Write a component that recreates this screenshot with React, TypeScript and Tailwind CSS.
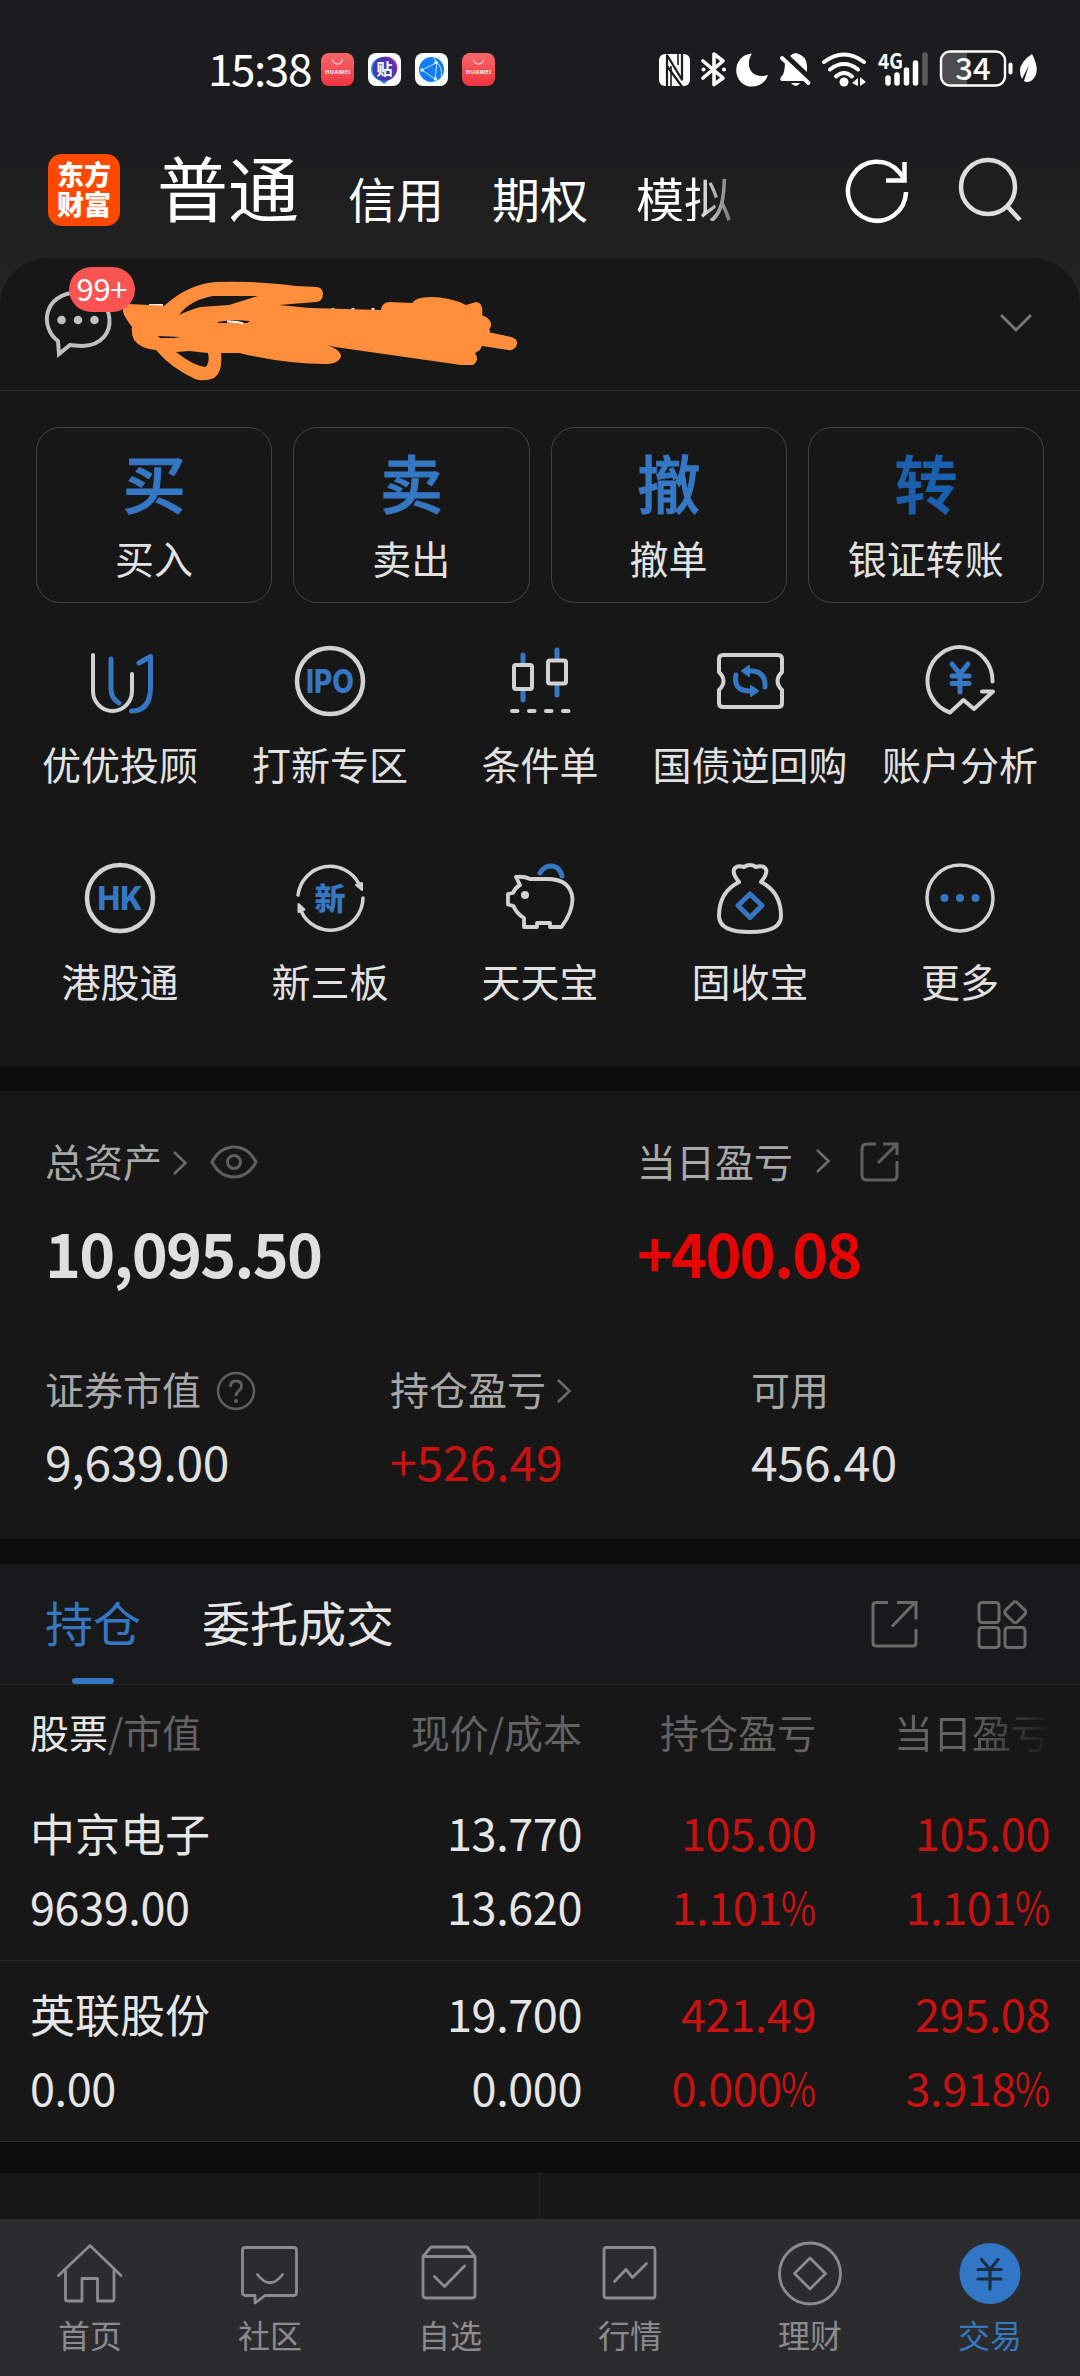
import type { ReactNode } from "react";
import clsx from "clsx";

const BLUE = "#3577c3";
const WHITE = "#d2d2d2";

type IconProps = { children: ReactNode; size?: number; className?: string };

function Icon({ children, size = 72, className }: IconProps) {
  return (
    <svg
      width={size}
      height={size}
      viewBox={`0 0 ${size} ${size}`}
      fill="none"
      strokeLinecap="round"
      strokeLinejoin="round"
      className={clsx("shrink-0", className)}
    >
      {children}
    </svg>
  );
}

function HuaweiIcon() {
  return (
    <svg width="33" height="33" viewBox="0 0 33 33" className="shrink-0">
      <defs>
        <linearGradient id="hw" x1="0" y1="0" x2="0" y2="1">
          <stop offset="0" stopColor="#f8686a" />
          <stop offset="1" stopColor="#ee3440" />
        </linearGradient>
      </defs>
      <rect width="33" height="33" rx="8" fill="url(#hw)" />
      <path d="M11.5 6.5a5 4.6 0 0 0 10 0" fill="none" stroke="#fff" strokeWidth="1" />
      <text
        x="16.5"
        y="21"
        textAnchor="middle"
        fontSize="5.6"
        fontWeight="700"
        textLength="25"
        fill="#fff"
        fontFamily="Open Sans, sans-serif"
      >
        HUAWEI
      </text>
    </svg>
  );
}

function StatusBar() {
  return (
    <div className="flex h-[136px] items-start pl-[208px] pt-[50px]">
      <div className="-mt-[2px] flex h-[38px] w-[113px] items-center text-[44px] leading-none tracking-[-1.4px] text-white">
        15:38
      </div>
      <div className="flex h-[38px] items-center gap-[14px]">
        <HuaweiIcon />
        <svg width="33" height="33" viewBox="0 0 33 33">
          <rect width="33" height="33" rx="8" fill="#fff" />
          <path d="M12 28l4 3 4-3z" fill="#2f8be8" />
          <circle cx="15" cy="16" r="12" fill="#29a3ee" />
          <circle cx="18" cy="15" r="11.5" fill="#e0408c" />
          <circle cx="16.5" cy="16" r="12" fill="#4937ae" />
          <text
            x="16.5"
            y="22"
            textAnchor="middle"
            fontSize="16"
            fontWeight="700"
            fill="#fff"
            fontFamily="Noto Sans CJK SC, sans-serif"
          >
            贴
          </text>
        </svg>
        <svg width="33" height="33" viewBox="0 0 33 33">
          <rect width="33" height="33" rx="8" fill="#fff" />
          <circle cx="16.5" cy="16.5" r="12.5" fill="#127df0" />
          <path
            d="M7 17L22 9.5M7 17l13 9M22 9.5l-2 16.5M22 9.5q6 6 4 14M22 9.5l-4-6"
            stroke="#bfe3ff"
            strokeWidth="1"
            fill="none"
          />
          <circle cx="7" cy="17" r="1.8" fill="#d5edff" />
          <circle cx="21" cy="9.5" r="1.8" fill="#d5edff" />
          <circle cx="20.5" cy="26" r="1.8" fill="#d5edff" />
        </svg>
        <HuaweiIcon />
      </div>
      <svg width="384" height="64" viewBox="658 36 384 64" className="-mt-[14px] ml-[163px] shrink-0" fill="none">
        {/* nfc */}
        <rect x="659" y="54" width="31" height="32" rx="6" fill="#fff" />
        <path d="M667 86V54.5M667 55l15.5 25.5M667 66l16 22M682 54v25" stroke="#1c1c1e" strokeWidth="2.2" />
        <path d="M671 66v20M678 54v11" stroke="#1c1c1e" strokeWidth="1.6" />
        {/* bluetooth */}
        <path
          d="M703 61l20 17-9 6.5V54l9 7-20 17"
          stroke="#fff"
          strokeWidth="3.6"
          strokeLinecap="round"
          strokeLinejoin="round"
        />
        <circle cx="703.5" cy="69.5" r="2" fill="#fff" />
        <circle cx="724" cy="69.5" r="2" fill="#fff" />
        {/* do not disturb */}
        <path d="M752 53.5C733 55 731 80 747 86 757 88 765 84 768 75 752 80 744 66 752 53.5z" fill="#fff" />
        {/* muted bell */}
        <path d="M785 62l22 19h-25q-3-1-1-4 4-3 4-15z" fill="#fff" />
        <path d="M790 56q3-3 6-3 11 3 11 13v6z" fill="#fff" />
        <path d="M791 83h9q-4 6-9 0z" fill="#fff" />
        <path d="M782 58l26.5 25" stroke="#fff" strokeWidth="4" strokeLinecap="round" />
        {/* wifi */}
        <path
          d="M824 62q20-15 40 0M830 69.5q14-11 28 0M836 76.5q8-7 16 0"
          stroke="#fff"
          strokeWidth="4"
          strokeLinecap="round"
        />
        <circle cx="844" cy="82" r="4.5" fill="#fff" />
        <path d="M852 83l6-5v8zM866 82l-6-5v9z" fill="#fff" />
        {/* signal */}
        <text
          x="878"
          y="69"
          fontSize="21"
          fontWeight="700"
          textLength="25"
          lengthAdjust="spacingAndGlyphs"
          fill="#fff"
          fontFamily="Noto Sans CJK SC, sans-serif"
        >
          4G
        </text>
        <path d="M888 78v5M897 75v8M906.5 70v13M915.5 63v20" stroke="#fff" strokeWidth="5.5" strokeLinecap="round" />
        <path d="M925 55v28" stroke="#5c5c5e" strokeWidth="5.5" strokeLinecap="round" />
        {/* battery */}
        <path d="M967 52h-14q-11 0-11 10v13q0 10 11 10h14z" fill="#4d4d4f" />
        <rect x="941" y="51.5" width="64" height="34" rx="9" stroke="#fff" strokeWidth="2.4" />
        <path d="M1010.5 64.5v8" stroke="#fff" strokeWidth="4" strokeLinecap="round" />
        <text
          x="973"
          y="80"
          textAnchor="middle"
          fontSize="31"
          fontWeight="500"
          fill="#fff"
          fontFamily="Noto Sans CJK SC, sans-serif"
        >
          34
        </text>
        <path d="M1032 54q10 19-1 27-4 2-7 0l5-16-7 14q-7-14 10-25z" fill="#fff" />
      </svg>
    </div>
  );
}

function Header() {
  return (
    <div className="flex h-[122px] items-start pl-12">
      <div className="mt-[18px] size-[72px] rounded-[14px] bg-[#ff4800] pt-[5px] text-center text-[27px] font-black leading-[30px] text-white">
        东方
        <br />
        财富
      </div>
      <div className="ml-[37px] mt-[13px] text-[71px] leading-[72px] text-white">普通</div>
      <div className="ml-[49px] mt-[37px] flex w-[400px] gap-12 text-[48px] leading-[48px] text-white">
        <span>信用</span>
        <span>期权</span>
        <span className="bg-linear-to-r from-white from-60% to-[#777] bg-clip-text text-transparent">模拟</span>
      </div>
      <svg width="190" height="70" viewBox="842 156 190 70" fill="none" className="ml-[95px] mt-5 shrink-0">
        <path d="M905 192a29 29.5 0 1 1-7-20l6 8" stroke="#fff" strokeWidth="4.5" />
        <path d="M903.5 162v18.5H885" stroke="#fff" strokeWidth="4.5" />
        <circle cx="987" cy="187" r="27" stroke="#dedede" strokeWidth="4.5" />
        <path d="M1006 206l13 14" stroke="#dedede" strokeWidth="4.5" />
      </svg>
    </div>
  );
}

function AccountRow() {
  return (
    <div className="flex h-[133px] items-start justify-between rounded-t-[48px] border-b border-[#303030] bg-[#171717] pr-[47px]">
      <svg width="540" height="130" viewBox="0 258 540 130" fill="none" className="shrink-0">
        <path
          d="M58 341C40 328 42 294 78 292c38 0 44 52 5 54-6 0-12-1-13-1l-11 9z"
          stroke="#c0c0c0"
          strokeWidth="4"
        />
        <circle cx="61.5" cy="320" r="4.3" fill="#c0c0c0" />
        <circle cx="78" cy="320" r="4.3" fill="#c0c0c0" />
        <circle cx="94.5" cy="320" r="4.3" fill="#c0c0c0" />
        <path
          d="M149 305.5h14M175 311v6M157 334l20 2M313 308v3M333 308v3M353 308v3M373 308v3M488 330v4"
          stroke="#e8e8e8"
          strokeWidth="3"
        />
        {/* hand-drawn marker over the account name */}
        <path
          d="M123 311Q122 304 129 304L149 305 164 306Q185 287 208 283 216 281 250 282 275 283 296 286L317 287Q323 288 323 294 323 301 316 302L279 305 310 308 381 310Q382 302 390 302L412 303Q416 297 430 297 450 297 466 305L476 302Q484 303 482 315 492 319 491 326L488 332 511 337Q518 339 517 344 515 351 508 350L482 346 480 350 475 353Q480 360 473 365L461 365 335 347 309 341Q340 346 341 356 339 364 325 364 285 364 239 353L221 353Q223 372 214 378 204 382 195 379 171 368 156 350 141 349 134 340 131 334 132 327 123 315 123 311Z"
          fill="#ff8e3c"
        />
        <path d="M179 315Q190 300 213 296L258 296 229 305 200 307Q187 311 179 315Z" fill="#171717" />
        <path d="M176 352L190 351 198 352 208 353Q210 361 206 367 194 366 176 352Z" fill="#171717" />
        <path d="M218 322Q231 319 250 321L247 323H218ZM158 336L180 337 174 338 160 338Z" fill="#171717" />
        <path d="M227 321.5q11 0 16 2" stroke="#fff" strokeWidth="2" />
        <rect x="69" y="267" width="66" height="45" rx="22.5" fill="#f95353" />
        <text
          x="102"
          y="301"
          textAnchor="middle"
          fontSize="31"
          textLength="51"
          fill="#fff"
          fontFamily="Noto Sans CJK SC, sans-serif"
        >
          99+
        </text>
      </svg>
      <svg width="34" height="20" viewBox="0 0 34 20" fill="none" className="mt-[55px]">
        <path d="M2 2l15 15L32 2" stroke="#777" strokeWidth="3" />
      </svg>
    </div>
  );
}

const ACTIONS = [
  { glyph: "买", label: "买入" },
  { glyph: "卖", label: "卖出" },
  { glyph: "撤", label: "撤单" },
  { glyph: "转", label: "银证转账", deep: true },
];

function Actions() {
  return (
    <div className="grid h-[176px] grid-cols-4 gap-[21px] px-9">
      {ACTIONS.map((a) => (
        <div key={a.label} className="flex flex-col items-center rounded-[24px] border border-[#424242] pt-[22px]">
          <span
            className={clsx(
              "text-[63px] font-medium leading-[62px] [-webkit-text-stroke:1px_currentColor]",
              a.deep ? "text-[#1b60ae]" : "text-[#3577c3]"
            )}
          >
            {a.glyph}
          </span>
          <span className="mt-[25px] text-[39px] leading-10 text-[#e2e2e2]">{a.label}</span>
        </div>
      ))}
    </div>
  );
}

const badgeText = {
  textAnchor: "middle" as const,
  fill: BLUE,
  fontWeight: 800,
  lengthAdjust: "spacingAndGlyphs" as const,
};

const SHORTCUTS: { label: string; icon: ReactNode }[] = [
  {
    label: "优优投顾",
    icon: (
      <g strokeWidth="4">
        <path d="M27 14v30q0 9 8 14M55 18l11.5-6.5V42q0 24-19 24" stroke={BLUE} strokeWidth="5" />
        <path d="M9 10v36a19.5 20 0 0 0 39 0V29" stroke={WHITE} />
      </g>
    ),
  },
  {
    label: "打新专区",
    icon: (
      <>
        <circle cx="36" cy="36" r="33" stroke={WHITE} strokeWidth="4.5" />
        <text {...badgeText} x="36" y="47.5" fontSize="32" textLength="48" fontFamily="Inter, sans-serif">
          IPO
        </text>
      </>
    ),
  },
  {
    label: "条件单",
    icon: (
      <>
        <path d="M19 10v8M19 46v9M53 5v9M53 41v9" stroke={BLUE} strokeWidth="5" />
        <rect x="10" y="20" width="18" height="24" rx="2" stroke={WHITE} strokeWidth="4" />
        <rect x="44" y="15.5" width="18" height="23" rx="2" stroke={WHITE} strokeWidth="4" />
        <path d="M8 66h5.5M25 66h5.5M42 66h5.5M59 66h5.5" stroke={WHITE} strokeWidth="4" />
      </>
    ),
  },
  {
    label: "国债逆回购",
    icon: (
      <>
        <path
          d="M9 10h55q4 0 4 4v13q-9 9 0 18v13q0 4-4 4H9q-4 0-4-4V45q9-9 0-18V14q0-4 4-4z"
          stroke={WHITE}
          strokeWidth="4"
        />
        <path d="M34 26h4q14 1 13 16M22 30q-3 16 14 16h3" stroke={BLUE} strokeWidth="5" />
        <path d="M28 26l7-5v10zM44 46l-7-5v10z" fill={BLUE} stroke={BLUE} strokeWidth="2" />
      </>
    ),
  },
  {
    label: "账户分析",
    icon: (
      <>
        <path d="M68.5 36.5A32.5 33.5 0 1 0 26 67.5l13.5-12.5 10.5 9 19-17.5H58" stroke={WHITE} strokeWidth="4" />
        <path d="M28 19l8 10 8-10M36 30v17M28 31h17M28 38.5h17" stroke={BLUE} strokeWidth="5" />
      </>
    ),
  },
  {
    label: "港股通",
    icon: (
      <>
        <circle cx="36" cy="36" r="33" stroke={WHITE} strokeWidth="4.5" />
        <text {...badgeText} x="36" y="47.5" fontSize="32" textLength="45" fontFamily="Inter, sans-serif">
          HK
        </text>
      </>
    ),
  },
  {
    label: "新三板",
    icon: (
      <>
        <path d="M4 33a32.5 33 0 0 1 61-11M69 36a32.5 33 0 0 1-62 13" stroke={WHITE} strokeWidth="3.5" />
        <path d="M68 28l-6-5 6-2zM4.5 42l6 5.5-6 2.5z" fill={WHITE} stroke={WHITE} strokeWidth="2" />
        <text {...badgeText} x="36" y="47.5" fontSize="31" fontFamily="Noto Sans CJK SC, sans-serif">
          新
        </text>
      </>
    ),
  },
  {
    label: "天天宝",
    icon: (
      <>
        <path d="M36 11q5-8 12-7 8 1 10 10" stroke={BLUE} strokeWidth="5" />
        <path
          d="M12 15q8-1 14 2h17q24 0 25.5 20 0 13-11 28H46v-4H33v4H20v-9Q12 51 9.5 44L4 42.5V32l5-1q2-5 7-8z"
          stroke={WHITE}
          strokeWidth="3.8"
        />
        <circle cx="21" cy="33" r="4" fill={WHITE} />
      </>
    ),
  },
  {
    label: "固收宝",
    icon: (
      <>
        <path
          d="M25 20q-8-10-4-14 3-3 9-1 6-4 12 0 6-2 9 1 4 4-4 14 20 10 20 34 0 16-31 16T5 54q0-24 20-34z"
          stroke={WHITE}
          strokeWidth="4"
        />
        <path d="M36 32L48 43.5 36 55.5 24 43.5z" stroke={BLUE} strokeWidth="5" />
      </>
    ),
  },
  {
    label: "更多",
    icon: (
      <>
        <circle cx="36" cy="36" r="33" stroke={WHITE} strokeWidth="3.5" />
        <circle cx="20.5" cy="36" r="4" fill={BLUE} />
        <circle cx="36" cy="36" r="4" fill={BLUE} />
        <circle cx="51.5" cy="36" r="4" fill={BLUE} />
      </>
    ),
  },
];

function Shortcuts() {
  return (
    <div className="mt-[42px] grid grid-cols-5 px-[15px]">
      {SHORTCUTS.map((s) => (
        <div key={s.label} className="flex h-[217px] flex-col items-center">
          <Icon>{s.icon}</Icon>
          <span className="mt-[26px] whitespace-nowrap text-[39px] leading-10 text-[#e2e2e2]">{s.label}</span>
        </div>
      ))}
    </div>
  );
}

function Chevron({ className }: { className?: string }) {
  return (
    <svg width="16" height="26" viewBox="0 0 16 26" fill="none" className={className}>
      <path d="M2 2l11.5 11L2 24" stroke="#6c6c6c" strokeWidth="2.5" />
    </svg>
  );
}

function Assets() {
  return (
    <div className="h-[448px] bg-[#171717] text-[39px] leading-10 text-[#a8a8a8]">
      <div className="flex pt-[49px]">
        <div className="w-[591px] pl-[45px]">
          <div className="flex h-10 items-center">
            <span>总资产</span>
            <Chevron className="ml-[10px] mt-[5px]" />
            <svg width="48" height="34" viewBox="0 0 48 34" fill="none" className="ml-[22px] mt-[3px]">
              <path d="M2 17Q10 2 24 2t22 15Q38 32 24 32T2 17z" stroke="#606060" strokeWidth="3" />
              <circle cx="24" cy="17" r="6.5" stroke="#606060" strokeWidth="3" />
            </svg>
          </div>
          <div className="mt-[40px] text-[61px] font-bold leading-[64px] tracking-[-1.7px] text-[#dfdfdf]">
            10,095.50
          </div>
        </div>
        <div className="pl-[46px]">
          <div className="flex h-10 items-center">
            <span>当日盈亏</span>
            <Chevron className="ml-[22px] mt-[2px]" />
            <svg width="40" height="40" viewBox="0 0 40 40" fill="none" className="ml-[29px] mt-[3px]">
              <path d="M16 2H7Q2 2 2 7v26q0 5 5 5h26q4 0 4-5V19M23 2h14v11M18 21L36 3" stroke="#606060" strokeWidth="3" />
            </svg>
          </div>
          <div className="mt-[40px] text-[61px] font-bold leading-[64px] tracking-[-1.7px] text-[#e60505]">+400.08</div>
        </div>
      </div>
      <div className="mt-[84px] flex pl-[45px]">
        <div className="w-[345px]">
          <div className="flex h-10 items-center">
            <span>证券市值</span>
            <svg width="42" height="42" viewBox="0 0 42 42" fill="none" className="ml-[14px] mt-[5px]">
              <circle cx="21" cy="21" r="18" stroke="#606060" strokeWidth="2.5" />
              <path d="M15.5 17q0-6 5.5-6t5.5 5q0 3-3 5-2.5 2-2.5 5" stroke="#606060" strokeWidth="2.8" />
              <circle cx="21" cy="31" r="2" fill="#606060" />
            </svg>
          </div>
          <div className="mt-[27px] text-[48px] leading-[50px] tracking-[-0.3px] text-[#e0e0e0]">9,639.00</div>
        </div>
        <div className="w-[361px]">
          <div className="flex h-10 items-center">
            <span>持仓盈亏</span>
            <Chevron className="ml-[10px] mt-[5px]" />
          </div>
          <div className="mt-[27px] text-[48px] leading-[50px] tracking-[-0.1px] text-[#cb1212]">+526.49</div>
        </div>
        <div>
          <div className="h-10">可用</div>
          <div className="mt-[27px] text-[48px] leading-[50px] tracking-[-0.1px] text-[#e0e0e0]">456.40</div>
        </div>
      </div>
    </div>
  );
}

const POSITIONS = [
  { name: "中京电子", value: "9639.00", price: "13.770", cost: "13.620", pnl: ["105.00", "1.101"], day: ["105.00", "1.101"] },
  { name: "英联股份", value: "0.00", price: "19.700", cost: "0.000", pnl: ["421.49", "0.000"], day: ["295.08", "3.918"] },
];

const COLS = "grid grid-cols-[252px_300px_234px_234px] pl-[30px] pr-[30px]";

function Holdings() {
  return (
    <div className="bg-[#171717]">
      <div className="flex h-[121px] items-start border-b border-[#282828] bg-[#18191a] pl-[45px] text-[48px] leading-[48px]">
        <div className="flex h-[120px] flex-col items-center pt-[33px] text-[#3577c3]">
          持仓
          <div className="mt-auto h-[6px] w-[42px] rounded-full bg-[#3577c3]" />
        </div>
        <div className="ml-[61px] pt-[33px] text-[#e6e6e6]">委托成交</div>
        <svg
          width="160"
          height="52"
          viewBox="870 1599 160 52"
          fill="none"
          stroke="#6b6b6b"
          strokeWidth="3"
          className="ml-[476px] mt-[35px]"
        >
          <path d="M888 1602.5h-12q-3 0-3 3v37q0 3.5 3 3.5h37q3 0 3-3.5V1629M897 1602.5h19v17M892 1626.5l23-24" />
          <rect x="979" y="1602.5" width="20" height="20" rx="3" />
          <rect x="979" y="1627.5" width="20" height="20" rx="3" />
          <rect x="1005" y="1627.5" width="20" height="20" rx="3" />
          <rect x="1007" y="1604" width="16.5" height="16.5" rx="3" transform="rotate(45 1015.25 1612.25)" />
        </svg>
      </div>
      <div className={clsx(COLS, "h-[95px] pt-[26px] text-[39px] leading-10 text-[#636363]")}>
        <div>
          <span className="text-[#e6e6e6]">股票</span>/市值
        </div>
        <div className="text-right">现价/成本</div>
        <div className="text-right">持仓盈亏</div>
        <div className="text-right">
          <span className="bg-linear-to-r from-[#636363] from-50% to-[#1b1b1b] bg-clip-text text-transparent">
            当日盈亏
          </span>
        </div>
      </div>
      {POSITIONS.map((p) => (
        <div
          key={p.name}
          className={clsx(
            COLS,
            "h-[181px] border-b border-[#2a2a2a] pt-[15px] text-[45px] leading-[74px] tracking-[-0.4px] text-[#e6e6e6]"
          )}
        >
          <div>
            <div className="pt-px leading-[73px] tracking-normal">{p.name}</div>
            <div>{p.value}</div>
          </div>
          <div className="text-right">
            <div>{p.price}</div>
            <div>{p.cost}</div>
          </div>
          {[p.pnl, p.day].map(([amount, percent], i) => (
            <div key={i} className="text-right text-[#c81212]">
              <div>{amount}</div>
              <div>
                {percent}
                <span className="-ml-[7px] inline-block origin-right scale-x-85">%</span>
              </div>
            </div>
          ))}
        </div>
      ))}
    </div>
  );
}

const TABS: { label: string; active?: boolean; icon: ReactNode }[] = [
  {
    label: "首页",
    icon: <path d="M1.5 35.5L33 5.5l31 30M8.5 30v29q0 2 2 2H25V38.5h15.5V61H55q2 0 2-2V30" />,
  },
  {
    label: "社区",
    icon: (
      <path d="M8.5 7.5h48q3 0 3 3v42q0 3-3 3H28l-10 7.5v-7.5H8.5q-3 0-3-3v-42q0-3 3-3zM20.5 34.5q12.5 16.5 25 0" />
    ),
  },
  {
    label: "自选",
    icon: <path d="M6 16.5V55q0 3 3 3h46q3 0 3-3V16.5L50 7H14zM6 16.5h52M17.5 36.5l10 10 20-20.5" />,
  },
  {
    label: "行情",
    icon: (
      <>
        <rect x="7" y="7.5" width="51" height="50.5" rx="2.5" />
        <path d="M17.5 41.5l11.5-12 6.5 8 14-14" />
      </>
    ),
  },
  {
    label: "理财",
    icon: (
      <>
        <circle cx="33" cy="33.5" r="30.5" />
        <path d="M33 18l15.5 15.5L33 49 17.5 33.5z" />
      </>
    ),
  },
  {
    label: "交易",
    active: true,
    icon: (
      <>
        <circle cx="33" cy="33.5" r="30.5" fill="#3276c6" stroke="none" />
        <path d="M24.5 19.5l8.5 10 8-10M33 30v19M21 29.5h23M21 39h23" stroke="#1d2d47" strokeWidth="3.2" />
      </>
    ),
  },
];

function TabBar() {
  return (
    <div className="grid h-[157px] grid-cols-6 bg-[#2c2c2e] pt-[21px]">
      {TABS.map((t) => (
        <div key={t.label} className="flex flex-col items-center">
          <Icon size={66}>
            <g stroke="#8c8c90" strokeWidth="2.8">
              {t.icon}
            </g>
          </Icon>
          <span className={clsx("mt-[10px] text-[32px] leading-9", t.active ? "text-[#3577c3]" : "text-[#8c8c90]")}>
            {t.label}
          </span>
        </div>
      ))}
    </div>
  );
}

export default function App() {
  return (
    <div className="h-[2376px] w-[1080px] overflow-hidden bg-[#0d0d0d] font-['Noto_Sans_CJK_SC',sans-serif]">
      <div className="bg-linear-to-b from-[#1c1c1e] from-35% to-[#252525] to-85%">
        <StatusBar />
        <Header />
        <AccountRow />
      </div>
      <div className="h-[675px] bg-[#171717] pt-9">
        <Actions />
        <Shortcuts />
      </div>
      <div className="h-[25px]" />
      <Assets />
      <div className="h-[25px]" />
      <Holdings />
      <div className="h-[31px]" />
      <div className="grid h-[46px] grid-cols-2 bg-[#171717]">
        <div className="border-r border-[#222]" />
      </div>
      <TabBar />
    </div>
  );
}
